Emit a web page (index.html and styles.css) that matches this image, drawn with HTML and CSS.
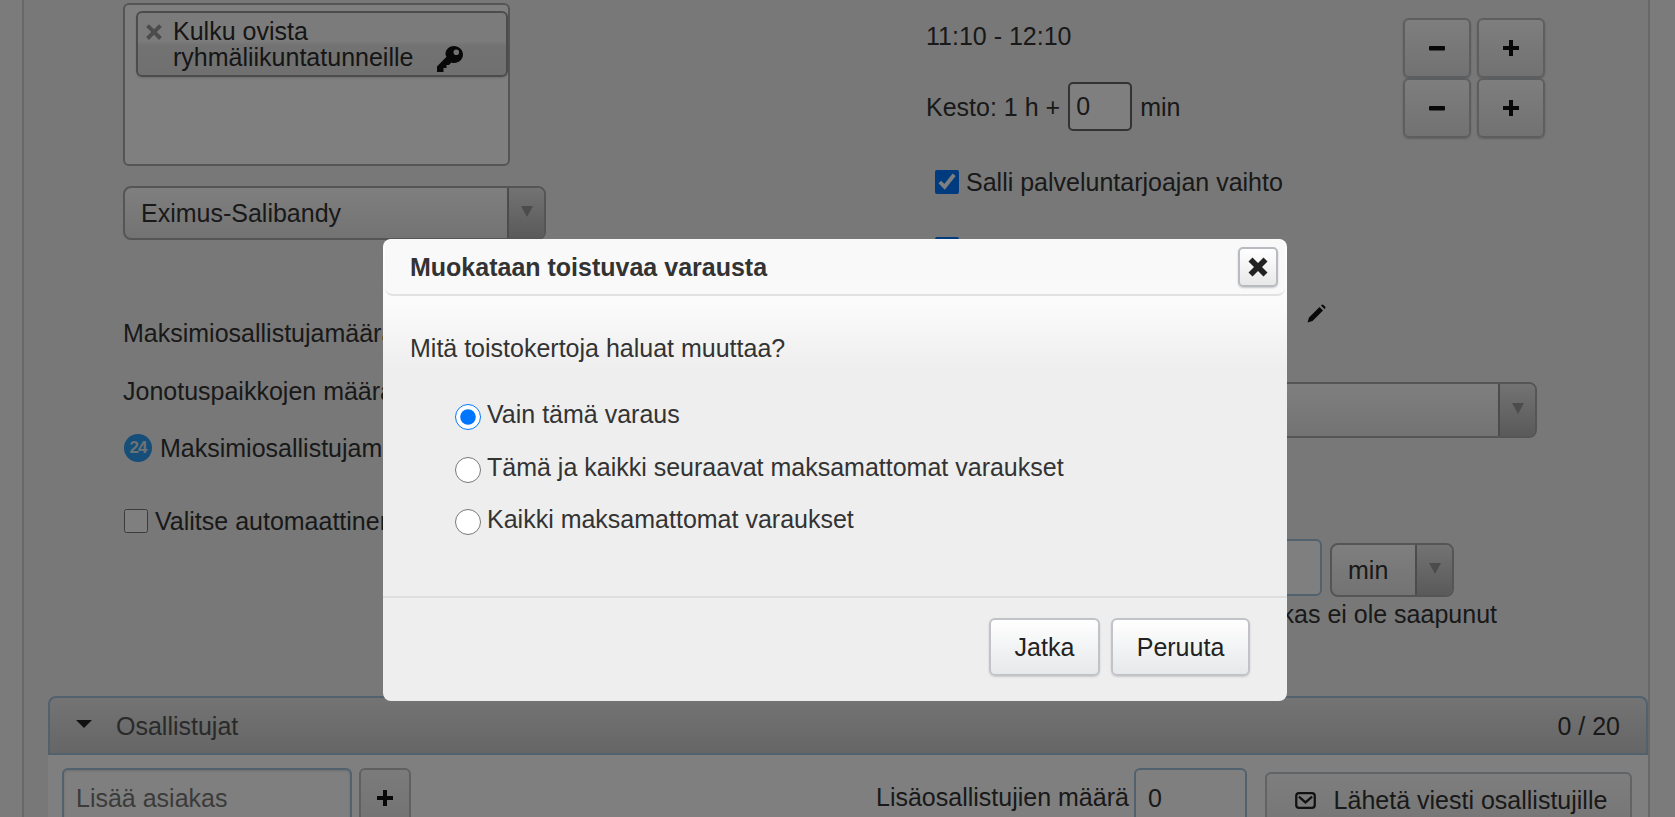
FILE: index.html
```html
<!DOCTYPE html>
<html lang="fi">
<head>
<meta charset="utf-8">
<title>Muokataan toistuvaa varausta</title>
<link rel="stylesheet" href="styles.css">
</head>
<body>
<div class="page">
  <div class="container">
    <div class="form">
      <div class="left">
        <div class="tagbox">
          <div class="chip">
            <svg class="chip-x" viewBox="0 0 16 16"><path d="M3.500 1 8 5.500 12.500 1 15 3.500 10.500 8 15 12.500 12.500 15 8 10.500 3.500 15 1 12.500 5.500 8 1 3.500z"/></svg>
            <div class="chip-text">Kulku ovista<br>ryhmäliikuntatunneille
              <svg class="key" viewBox="0 0 26 26"><path fill-rule="evenodd" d="M17 0c4.800 0 9 3.800 9 8.500S22 17 17.200 17c-1 0-2-.1-2.800-.5L12 19h-2.500v3H6.500v4H0v-5.500l9.500-9.700C8.900 9.800 8.500 9 8.500 8 8.500 3.500 12.500 0 17 0zm2.300 3.500a2.800 2.800 0 1 0 0 5.600 2.800 2.800 0 0 0 0-5.600z"/></svg>
            </div>
          </div>
        </div>
        <div class="select select-provider">
          <span class="select-value">Eximus-Salibandy</span>
          <span class="select-arrow"><i class="tri"></i></span>
        </div>
        <div class="line line-max">Maksimiosallistujamäärä</div>
        <div class="line line-queue">Jonotuspaikkojen määrä</div>
        <div class="line line-badge"><span class="badge">24</span>Maksimiosallistujamäärä</div>
        <label class="line line-auto"><input class="check check-left" type="checkbox">Valitse automaattinen</label>
      </div>
      <div class="right">
        <div class="time-row">
          <div class="time-text">11:10 - 12:10</div>
          <div class="steppers">
            <button class="step"><svg class="step-icon" viewBox="0 0 18 18"><rect x="1" y="7" width="16" height="4.500" rx="1"/></svg></button>
            <button class="step"><svg class="step-icon" viewBox="0 0 18 18"><path d="M7 1h4v6h6v4h-6v6H7v-6H1V7h6z"/></svg></button>
          </div>
        </div>
        <div class="time-row">
          <div class="duration">Kesto: 1 h + <input class="num" type="text" value="0"> min</div>
          <div class="steppers">
            <button class="step"><svg class="step-icon" viewBox="0 0 18 18"><rect x="1" y="7" width="16" height="4.500" rx="1"/></svg></button>
            <button class="step"><svg class="step-icon" viewBox="0 0 18 18"><path d="M7 1h4v6h6v4h-6v6H7v-6H1V7h6z"/></svg></button>
          </div>
        </div>
        <label class="line check-row"><input class="check" type="checkbox" checked>Salli palveluntarjoajan vaihto</label>
        <label class="line check-row check-row-2"><input class="check" type="checkbox" checked></label>
        <div class="pencil-row">
          <svg class="pencil" viewBox="0 0 20 20"><path d="M13.500 3 17 6.500 6.500 17 1.500 18.500 3 13.500zM15 1.500l.5-.5a1.400 1.400 0 0 1 2 0l1.500 1.500a1.400 1.400 0 0 1 0 2l-.5.5z"/></svg>
        </div>
        <div class="select select-wide">
          <span class="select-value"></span>
          <span class="select-arrow"><i class="tri"></i></span>
        </div>
        <div class="unit-row">
          <input class="unit-input" type="text">
          <div class="select select-unit">
            <span class="select-value">min</span>
            <span class="select-arrow"><i class="tri"></i></span>
          </div>
        </div>
        <div class="line note">jos asiakas ei ole saapunut</div>
      </div>
    </div>
    <div class="panel">
      <div class="panel-head">
        <i class="panel-tri"></i>
        <span class="panel-title">Osallistujat</span>
        <span class="panel-count">0 / 20</span>
      </div>
      <div class="panel-body">
        <input class="customer" type="text" placeholder="Lisää asiakas">
        <button class="add"><svg class="step-icon" viewBox="0 0 18 18"><path d="M7 1h4v6h6v4h-6v6H7v-6H1V7h6z"/></svg></button>
        <span class="extra-label">Lisäosallistujien määrä</span>
        <input class="extra" type="text" value="0">
        <button class="send">
          <svg class="mail" viewBox="0 0 22 18"><rect x="1.200" y="1.200" width="19.600" height="15.600" rx="3" fill="none" stroke="currentColor" stroke-width="2.400"/><path d="M4 5l7 6 7-6" fill="none" stroke="currentColor" stroke-width="2.400"/></svg>
          Lähetä viesti osallistujille
        </button>
      </div>
    </div>
  </div>
  <div class="overlay"></div>
  <div class="modal">
    <div class="modal-head">
      <h1 class="modal-title">Muokataan toistuvaa varausta</h1>
      <button class="close"><svg class="close-icon" viewBox="0 0 22 22"><path d="M5.500 1.500 11 7l5.500-5.500 4 4L15 11l5.500 5.500-4 4L11 15l-5.500 5.500-4-4L7 11 1.500 5.500z"/></svg></button>
    </div>
    <div class="modal-body">
      <p class="question">Mitä toistokertoja haluat muuttaa?</p>
      <label class="option"><input class="radio" type="radio" name="scope" checked><span>Vain tämä varaus</span></label>
      <label class="option"><input class="radio" type="radio" name="scope"><span>Tämä ja kaikki seuraavat maksamattomat varaukset</span></label>
      <label class="option"><input class="radio" type="radio" name="scope"><span>Kaikki maksamattomat varaukset</span></label>
    </div>
    <div class="modal-foot">
      <button class="action action-go">Jatka</button>
      <button class="action action-cancel">Peruuta</button>
    </div>
  </div>
</div>
</body>
</html>
```
FILE: styles.css
```css
* { box-sizing: border-box; }
html, body { margin: 0; height: 100%; overflow: hidden; }
body { font: 25px/30px "Liberation Sans", Arial, sans-serif; color: #333; background: #f6f6f6; }
button, input { font: inherit; color: inherit; }

.page { position: relative; width: 1675px; height: 817px; overflow: hidden; }
.container { margin: 0 25px 0 22px; height: 817px; padding: 3px 0 0 24px; border-left: 2px solid #d0d0d0; border-right: 2px solid #d0d0d0; background: #f0f0f0; }
.form { display: grid; grid-template-columns: 878px 1fr; height: 693px; }

.left { padding-left: 75px; }
.tagbox { width: 387px; height: 163px; padding: 6px 0 0 11px; background: #fff; border: 2px solid #aaa; border-radius: 6px; }
.chip { display: flex; width: 372px; height: 66px; padding: 5px 0 0 7px; border: 2px solid #999; border-radius: 6px; background: linear-gradient(#f6f6f6 46%, #e6e6e6 52%, #e0e0e0); box-shadow: 0 1px 2px rgba(0,0,0,.15); line-height: 26px; }
.chip-x { width: 18px; height: 18px; margin: 5px 10px 0 0; fill: #999; flex: none; }
.chip-text { position: relative; color: #2c2c2c; }
.key { width: 26px; height: 26px; margin-left: 17px; vertical-align: -6px; fill: #111; }

.select { display: flex; height: 54px; background: linear-gradient(#fefefe, #e6e6e6); border: 2px solid #aaa; border-radius: 8px; overflow: hidden; }
.select-value { flex: 1; padding-left: 16px; line-height: 50px; }
.select-arrow { display: flex; align-items: center; justify-content: center; flex: none; width: 37px; border-left: 2px solid #999; background: linear-gradient(#e6e6e6, #b4b4b4); }
.tri { width: 0; height: 0; border-left: 6px solid transparent; border-right: 6px solid transparent; border-top: 11px solid #999; margin-top: -4px; }
.select-provider { width: 423px; margin-top: 20px; }

.line { display: block; }
.line-max { margin-top: 78px; }
.line-queue { margin-top: 28px; }
.line-badge { display: flex; align-items: center; margin-top: 27px; }
.line-auto { display: flex; align-items: center; margin-top: 43px; }
.badge { display: inline-flex; align-items: center; justify-content: center; width: 28px; height: 28px; margin: 0 8px 0 1px; border-radius: 50%; background: #2a9cf0; color: #d8e4ee; font-size: 17px; font-weight: bold; letter-spacing: -1px; }
.check { width: 24px; height: 24px; margin: 0 7px 0 0; flex: none; }
.check-left { margin-left: 1px; margin-right: 7px; }

.right { min-width: 0; }
.time-row { display: flex; justify-content: space-between; width: 619px; }
.time-row:first-child { margin-top: 15px; }
.time-text { line-height: 36px; }
.duration { display: flex; align-items: center; gap: 8px; height: 49px; margin-top: 4px; white-space: nowrap; }
.steppers { display: flex; gap: 6px; }
.step { display: flex; align-items: center; justify-content: center; width: 68px; height: 60px; padding: 0; background: linear-gradient(#fcfcfc, #e4e4e4); border: 2px solid #b8bcc0; border-radius: 6px; box-shadow: 0 1px 2px rgba(0,0,0,.2); }
.step-icon { width: 18px; height: 18px; fill: #111; }
.num { width: 64px; height: 49px; padding: 0 6px; background: #fff; border: 2px solid #666; border-radius: 5px; }
.check-row { display: flex; align-items: center; margin: 29px 0 0 9px; }
.check-row-2 { margin-top: 40px; }
.pencil-row { margin: 43px 0 0 380px; height: 20px; }
.pencil { display: block; width: 20px; height: 20px; fill: #111; }
.select-wide { width: 437px; height: 56px; margin: 58px 0 0 174px; }
.unit-row { display: flex; align-items: flex-start; gap: 8px; margin: 101px 0 0 274px; }
.unit-input { width: 122px; height: 57px; background: #fff; border: 2px solid #a3c2dc; border-radius: 6px; }
.select-unit { width: 124px; margin-top: 4px; }
.note { width: 571px; margin-top: 2px; text-align: right; }

.panel { margin: 0; }
.panel-head { display: flex; align-items: center; height: 59px; padding: 0 26px 0 26px; background: linear-gradient(#e8e8e8, #cccccc); border: 2px solid #a3c2dc; border-radius: 8px 8px 0 0; }
.panel-tri { width: 0; height: 0; margin-right: 24px; border-left: 8px solid transparent; border-right: 8px solid transparent; border-top: 8px solid #222; margin-top: -4px; }
.panel-title { flex: 1; color: #555; }
.panel-count { color: #333; }
.panel-body { display: flex; align-items: flex-start; height: 80px; padding: 13px 0 0 14px; background: #fff; }
.customer { width: 290px; height: 60px; padding: 0 12px; background: #fff; border: 2px solid #a3c2dc; border-radius: 6px; box-shadow: inset 0 1px 3px rgba(0,0,0,.15); }
.customer::placeholder { color: #777; }
.add { display: flex; align-items: center; justify-content: center; width: 52px; height: 60px; margin-left: 7px; padding: 0; background: linear-gradient(#f6f6f6, #e6e6e6); border: 2px solid #c0c0c0; border-radius: 6px; }
.extra-label { width: 258px; margin: 14px 0 0 465px; white-space: nowrap; }
.extra { width: 113px; height: 60px; padding: 0 12px; background: #fff; border: 2px solid #a3c2dc; border-radius: 6px; }
.send { display: flex; align-items: center; justify-content: center; gap: 18px; width: 367px; height: 56px; margin: 4px 0 0 18px; padding: 0 0 0 5px; background: linear-gradient(#fcfcfc, #ececec); border: 2px solid #c0c8cc; border-radius: 6px; white-space: nowrap; }
.mail { width: 21px; height: 17px; color: #222; }

.overlay { position: absolute; inset: 0; background: rgba(0,0,0,.5); }
.modal { position: absolute; left: 383px; top: 239px; display: flex; flex-direction: column; width: 904px; height: 462px; background: linear-gradient(#fff 0, #fafafa 70px, #eee 130px); border-radius: 8px; }
.modal-head { display: flex; align-items: center; justify-content: space-between; height: 57px; margin: 0 2px 0 2px; padding: 0 7px 0 25px; background: #f9f9f9; border-bottom: 2px solid #e2e2e2; border-radius: 8px; }
.modal-title { margin: 0; font-size: 25px; font-weight: bold; color: #333; line-height: 30px; }
.close { display: flex; align-items: center; justify-content: center; width: 40px; height: 40px; margin-top: 0; padding: 0; background: linear-gradient(#fff, #e8e8e8); border: 2px solid #b8bcc0; border-radius: 5px; box-shadow: 0 1px 2px rgba(0,0,0,.2); }
.close-icon { width: 22px; height: 22px; fill: #222; }
.modal-body { flex: 1; padding: 37px 26px 0 27px; }
.question { margin: 0 0 37px; }
.option { display: flex; align-items: flex-start; height: 52.500px; padding-left: 45px; line-height: 28px; }
.radio { width: 26px; height: 26px; margin: 4px 6px 0 0; flex: none; }
.modal-foot { display: flex; justify-content: flex-end; gap: 11px; height: 105px; padding: 20px 37px 0 0; border-top: 2px solid #dedede; }
.action { height: 58px; padding: 0; background: linear-gradient(#fff, #e6e8ea); border: 2px solid #c0c4c8; border-radius: 6px; box-shadow: 0 1px 2px rgba(0,0,0,.15); color: #222; }
.action-go { width: 111px; }
.action-cancel { width: 139px; }
```
